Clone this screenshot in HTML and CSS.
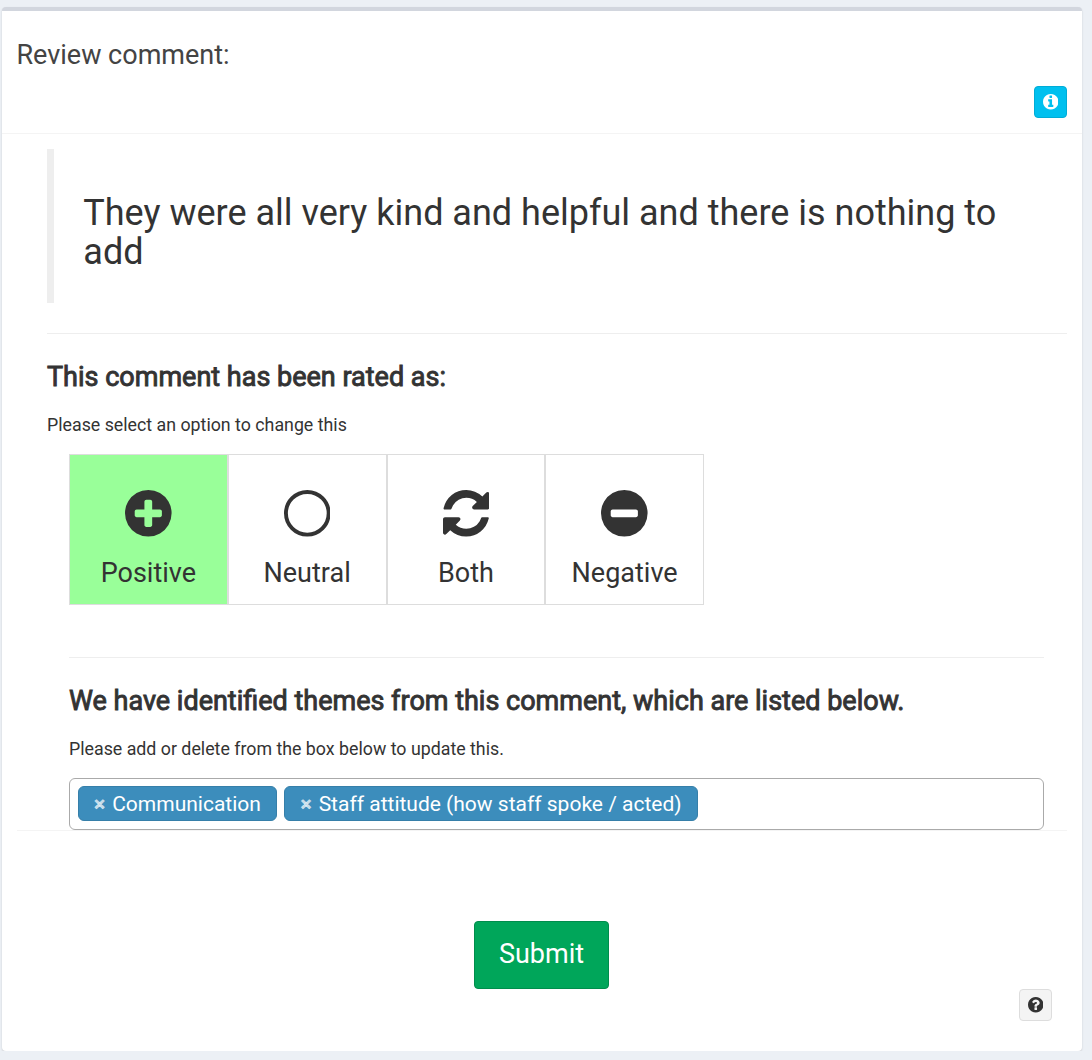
FILE: index.html
```html
<!DOCTYPE html>
<html lang="en">

<head>
    <meta charset="UTF-8">
    <meta name="viewport" content="width=device-width, initial-scale=1.0">
    <title>Review comment</title>
    <link rel="stylesheet" href="styles.css">
</head>

<body>
    <div class="box">
        <div class="box-header">
            <h3 class="box-title">Review comment:</h3>
            <button class="btn btn-info" aria-label="Info">
                <svg class="icon-small" viewBox="0 128 1536 1536"><path d="M1024 1376v-160q0-14-9-23t-23-9h-96v-512q0-14-9-23t-23-9h-320q-14 0-23 9t-9 23v160q0 14 9 23t23 9h96v320h-96q-14 0-23 9t-9 23v160q0 14 9 23t23 9h448q14 0 23-9t9-23zm-128-896v-160q0-14-9-23t-23-9h-192q-14 0-23 9t-9 23v160q0 14 9 23t23 9h192q14 0 23-9t9-23zm640 416q0 209-103 385.5t-279.5 279.5-385.5 103-385.5-103-279.5-279.5-103-385.5 103-385.5 279.5-279.5 385.5-103 385.5 103 279.5 279.5 103 385.5z"/></svg>
            </button>
        </div>

        <div class="box-body">
            <blockquote class="comment">They were all very kind and helpful and there is nothing to add</blockquote>
            <hr class="line">

            <h3 class="heading">This comment has been rated as:</h3>
            <p class="help">Please select an option to change this</p>

            <div class="ratings">
                <div class="rating active">
                    <svg class="icon" viewBox="0 128 1536 1536"><path d="M1216 960v-128q0-26-19-45t-45-19h-256v-256q0-26-19-45t-45-19h-128q-26 0-45 19t-19 45v256h-256q-26 0-45 19t-19 45v128q0 26 19 45t45 19h256v256q0 26 19 45t45 19h128q26 0 45-19t19-45v-256h256q26 0 45-19t19-45zm320-64q0 209-103 385.5t-279.5 279.5-385.5 103-385.5-103-279.5-279.5-103-385.5 103-385.5 279.5-279.5 385.5-103 385.5 103 279.5 279.5 103 385.5z"/></svg>
                    <span>Positive</span>
                </div>
                <div class="rating">
                    <svg class="icon" viewBox="0 0 1536 1536"><circle class="ring" cx="768" cy="768" r="704"/></svg>
                    <span>Neutral</span>
                </div>
                <div class="rating">
                    <svg class="icon" viewBox="0 128 1536 1536"><path d="M1511 1056q0 5-1 7-64 268-268 434.5t-478 166.5q-146 0-282.5-55t-243.5-157l-129 129q-19 19-45 19t-45-19-19-45v-448q0-26 19-45t45-19h448q26 0 45 19t19 45-19 45l-137 137q71 66 161 102t187 36q134 0 250-65t186-179q11-17 53-117 8-23 30-23h192q13 0 22.5 9.5t9.5 22.5zm25-800v448q0 26-19 45t-45 19h-448q-26 0-45-19t-19-45 19-45l138-138q-148-137-349-137-134 0-250 65t-186 179q-11 17-53 117-8 23-30 23h-199q-13 0-22.5-9.5t-9.5-22.5v-7q65-268 270-434.5t480-166.5q146 0 284 55.5t245 156.5l130-129q19-19 45-19t45 19 19 45z"/></svg>
                    <span>Both</span>
                </div>
                <div class="rating">
                    <svg class="icon" viewBox="0 128 1536 1536"><path d="M1216 960v-128q0-26-19-45t-45-19h-768q-26 0-45 19t-19 45v128q0 26 19 45t45 19h768q26 0 45-19t19-45zm320-64q0 209-103 385.5t-279.5 279.5-385.5 103-385.5-103-279.5-279.5-103-385.5 103-385.5 279.5-279.5 385.5-103 385.5 103 279.5 279.5 103 385.5z"/></svg>
                    <span>Negative</span>
                </div>
            </div>

            <div class="themes">
                <hr class="line">
                <h3 class="heading">We have identified themes from this comment, which are listed below.</h3>
                <p class="help">Please add or delete from the box below to update this.</p>
                <div class="select-box">
                    <div class="tag"><span class="remove">×</span>Communication</div>
                    <div class="tag"><span class="remove">×</span>Staff attitude (how staff spoke / acted)</div>
                </div>
            </div>
        </div>

        <div class="box-footer">
            <button class="btn-submit">Submit</button>
            <button class="btn btn-help" aria-label="Help">
                <svg class="icon-small" viewBox="0 128 1536 1536"><path d="M896 1376v-192q0-14-9-23t-23-9h-192q-14 0-23 9t-9 23v192q0 14 9 23t23 9h192q14 0 23-9t9-23zm256-672q0-88-55.5-163t-138.5-116-170-41q-243 0-371 213-15 24 8 42l132 100q7 6 19 6 16 0 25-12 53-68 86-92 34-24 86-24 48 0 85.5 26t37.5 59q0 38-20 61t-68 45q-63 28-115.5 86.5t-52.5 125.5v36q0 14 9 23t23 9h192q14 0 23-9t9-23q0-19 21.5-49.5t54.5-49.5q32-18 49-28.5t46-35 44.5-48 28-60.5 12.5-81zm384 192q0 209-103 385.5t-279.5 279.5-385.5 103-385.5-103-279.5-279.5-103-385.5 103-385.5 279.5-279.5 385.5-103 385.5 103 279.5 279.5 103 385.5z"/></svg>
            </button>
        </div>
    </div>
</body>

</html>
```
FILE: styles.css
```css
* {
    margin: 0;
    padding: 0;
    box-sizing: border-box;
}

body {
    background-color: #ecf0f5;
    color: #333;
    font-family: Roboto, sans-serif;
    font-size: 18px;
    padding: 7px 10px 0 2px;
}

button {
    font-family: inherit;
}

.box {
    height: 1044px;
    background-color: #fff;
    border-top: 4px solid #d2d6de;
    border-radius: 4px;
    box-shadow: 0 1px 2px rgba(0, 0, 0, 0.15);
}

.box-header {
    display: flex;
    flex-direction: column;
    height: 123px;
    padding: 29px 15px 15px 14.4px;
    border-bottom: 1px solid #f4f4f4;
}

.box-title {
    color: #444;
    font-size: 27px;
    font-weight: 400;
    line-height: 30px;
}

.btn {
    display: flex;
    align-items: center;
    justify-content: center;
    align-self: flex-end;
    width: 33px;
    height: 32px;
    border-radius: 4px;
}

.btn-info {
    margin-top: 16px;
    background-color: #00c0ef;
    border: 1px solid #00acd6;
    color: #fff;
}

.btn-help {
    margin-right: 15px;
    background-color: #f4f4f4;
    border: 1px solid #ddd;
    color: #333;
}

.icon-small {
    width: 15.5px;
    height: 15.5px;
    fill: currentColor;
}

.box-body {
    padding: 15px 15px 0 45px;
}

.comment {
    height: 154px;
    padding: 44.6px 30px 0 29.3px;
    border-left: 7px solid #eee;
    font-size: 36px;
    line-height: 39.2px;
}

.line {
    border: 0;
    border-top: 1px solid #eee;
}

.comment + .line {
    margin-top: 30px;
}

/* Roboto regular, thickened slightly */
.heading {
    margin-top: 28px;
    font-size: 27px;
    font-weight: 400;
    line-height: 30px;
    -webkit-text-stroke: 0.9px #333;
}

.help {
    margin-top: 20px;
    font-size: 17.8px;
    line-height: 26px;
}

.ratings {
    display: flex;
    width: 635px;
    height: 151px;
    margin: 16px 0 0 22px;
}

.rating {
    display: flex;
    flex: 1;
    flex-direction: column;
    align-items: center;
    padding-top: 35px;
    border: 1px solid #ddd;
    font-size: 27px;
    line-height: 38px;
}

.rating span {
    margin-top: 17.2px;
}

.active {
    background-color: #99ff99;
}

.icon {
    width: 46.6px;
    height: 46.6px;
    fill: #333;
}

.ring {
    fill: none;
    stroke: #333;
    stroke-width: 128;
}

.themes {
    margin: 52px 23px 0 22px;
}

.select-box {
    display: flex;
    gap: 7px;
    height: 52px;
    margin-top: 16px;
    padding: 7px 8px;
    border: 1px solid #aaa;
    border-radius: 6px;
}

.tag {
    height: 35px;
    padding: 0 15px;
    background-color: #3c8dbc;
    border: 1px solid #367fa9;
    border-radius: 6px;
    color: #fff;
    font-size: 21px;
    line-height: 34px;
}

.tag + .tag {
    padding-left: 15.6px;
}

.remove {
    margin-right: 7px;
    color: rgba(255, 255, 255, 0.7);
    font-weight: 700;
    -webkit-text-stroke: 0.4px rgba(255, 255, 255, 0.7);
}

.box-footer {
    display: flex;
    flex-direction: column;
    margin: 0 15px;
    padding-top: 90px;
    border-top: 1px solid #f4f4f4;
}

.btn-submit {
    align-self: center;
    width: 135px;
    height: 68px;
    margin-right: 1px;
    padding-bottom: 2px;
    background-color: #00a65a;
    border: 1px solid #008d4c;
    border-radius: 4px;
    color: #fff;
    font-size: 27px;
}
```
